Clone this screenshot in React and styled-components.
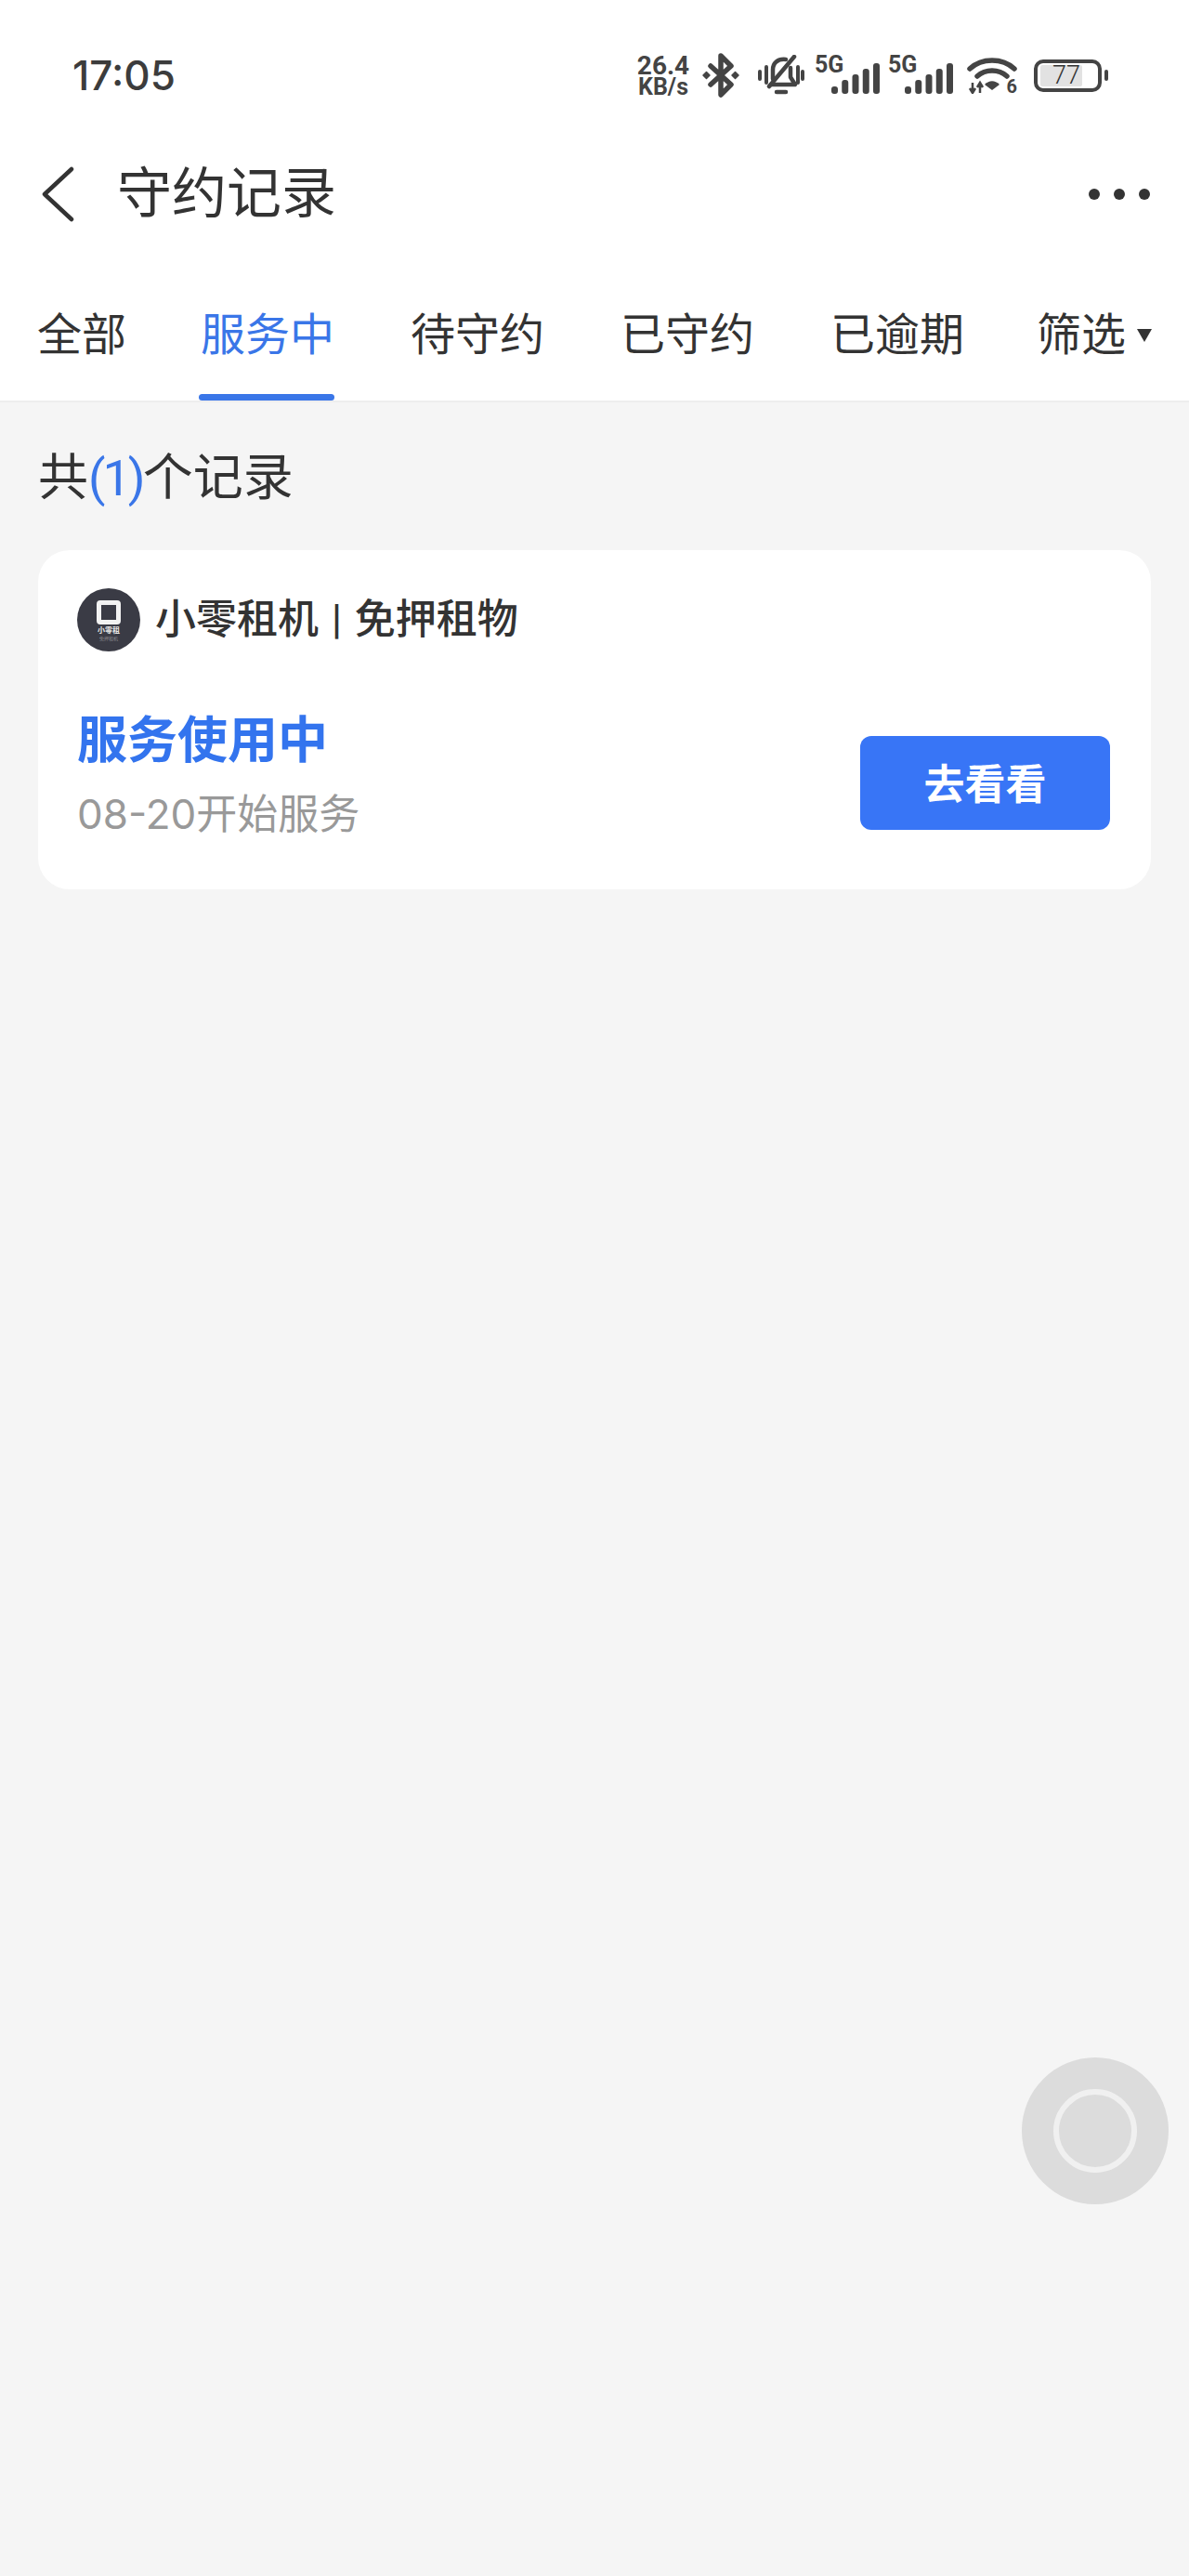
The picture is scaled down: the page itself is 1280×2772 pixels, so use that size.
import styled, { createGlobalStyle } from 'styled-components';

const GlobalStyle = createGlobalStyle`
  html, body {
    margin: 0;
    padding: 0;
    background: #f5f5f5;
    font-family: Roboto, "Noto Sans CJK SC", sans-serif;
  }
  * { box-sizing: border-box; }
`;

const tabs = ['全部', '服务中', '待守约', '已守约', '已逾期'];
const barHeights = [8, 15, 21, 27, 33];

function SignalBars() {
  return (
    <svg width="52" height="33" viewBox="0 0 52 33" fill="#444">
      {barHeights.map((h, i) => (
        <rect key={i} x={i * 11.25} y={33 - h} width="7" height={h} rx="3" />
      ))}
    </svg>
  );
}

function Network() {
  return (
    <NetGroup>
      <NetLabel>5G</NetLabel>
      <SignalBars />
    </NetGroup>
  );
}

function Logo() {
  return (
    <LogoCircle>
      <LogoMark />
      <LogoName>小零租</LogoName>
      <LogoSub>免押租机</LogoSub>
    </LogoCircle>
  );
}

export default function App() {
  return (
    <Page>
      <GlobalStyle />
      <Header>
        <StatusBar>
          <Time>17:05</Time>
          <StatusIcons>
            <Speed>
              <SpeedValue>26.4</SpeedValue>
              <SpeedUnit>KB/s</SpeedUnit>
            </Speed>
            <IconSlot $left={13}>
              <svg width="44" height="48" viewBox="0 0 44 48" fill="none" stroke="#444" strokeWidth="5.500" strokeLinejoin="round" strokeLinecap="round">
                <path d="M10 14 L32 34 L21 45 V3 L32 14 L10 34" />
                <path d="M2 24 L5.500 20.500 L9 24 L5.500 27.500 Z M33 24 L36.500 20.500 L40 24 L36.500 27.500 Z" fill="#444" strokeWidth="1.500" />
              </svg>
            </IconSlot>
            <IconSlot $left={17}>
              <svg width="50" height="44" viewBox="0 0 50 44" fill="none" stroke="#444" strokeWidth="4.500" strokeLinecap="round" strokeLinejoin="round">
                <path d="M16 26 V16 C16 9 21 4 30 5" />
                <path d="M35 14 V24 L40 32 H14" />
                <path d="M39 2 L12 34" />
                <path d="M20 40 H30" />
                <path d="M2 18 V26 M9 13 V30 M43 13 V30 M48 18 V26" strokeWidth="4" />
              </svg>
            </IconSlot>
            <IconSlot $left={11}><Network /></IconSlot>
            <IconSlot $left={9}><Network /></IconSlot>
            <IconSlot $left={15}>
              <WifiBox>
                <svg width="54" height="40" viewBox="0 0 54 40" fill="none" stroke="#444" strokeWidth="5.500" strokeLinecap="round">
                  <path d="M3 13 C16 1 38 1 51 13" />
                  <path d="M11 21 C20 13 34 13 43 21" />
                  <path d="M27 36 L19 30 C24 25 30 25 35 30 Z" fill="#444" stroke="none" />
                  <path d="M6 28 V39 M3 34 L6 39 L9 34 M14 39 V28 M11 33 L14 28 L17 33" strokeWidth="2.500" strokeLinecap="butt" />
                </svg>
                <WifiBadge>6</WifiBadge>
              </WifiBox>
            </IconSlot>
            <IconSlot $left={18}>
              <Battery>
                <BatteryFill />
                <BatteryText>77</BatteryText>
              </Battery>
            </IconSlot>
            <BatteryNub />
          </StatusIcons>
        </StatusBar>
        <NavBar>
          <svg width="36" height="60" viewBox="0 0 36 60" fill="none" stroke="#333" strokeWidth="4.500" strokeLinecap="round" strokeLinejoin="round">
            <path d="M33 3 L4 30 L33 57" />
          </svg>
          <Title>守约记录</Title>
          <MoreDots>
            <Dot />
            <Dot />
            <Dot />
          </MoreDots>
        </NavBar>
        <TabRow>
          {tabs.map((t, i) => (
            <Tab key={t} $active={i === 1}>{t}</Tab>
          ))}
          <FilterTab>
            筛选
            <FilterArrow />
          </FilterTab>
        </TabRow>
      </Header>
      <Content>
        <CountLine>共<CountNum>(1)</CountNum>个记录</CountLine>
        <Card>
          <CardHead>
            <Logo />
            <ShopName>小零租机 | 免押租物</ShopName>
          </CardHead>
          <CardBody>
            <div>
              <StateText>服务使用中</StateText>
              <SubText><SubDate>08-20</SubDate>开始服务</SubText>
            </div>
            <GoButton>去看看</GoButton>
          </CardBody>
        </Card>
      </Content>
      <FloatBall>
        <FloatRing />
      </FloatBall>
    </Page>
  );
}

const Page = styled.div`
  position: relative;
  width: 1280px;
  height: 2772px;
  overflow: hidden;
  background: #f5f5f5;
  color: #333;
`;

const Header = styled.div`
  background: #fff;
  border-bottom: 2px solid #eeeeee;
`;

const StatusBar = styled.div`
  height: 162px;
  padding: 0 87px 0 78px;
  display: flex;
  align-items: center;
  justify-content: space-between;
`;

const Time = styled.div`
  font-family: Inter, Roboto, sans-serif;
  font-size: 44px;
  font-weight: 500;
  color: #3c3c3c;
  line-height: 50px;
`;

const StatusIcons = styled.div`
  display: flex;
  align-items: center;
`;

const Speed = styled.div`
  display: flex;
  flex-direction: column;
  align-items: center;
  width: 56px;
  color: #444;
  font-weight: 700;
`;

const SpeedValue = styled.span`
  font-size: 28px;
  line-height: 24px;
`;

const SpeedUnit = styled.span`
  font-size: 25px;
  line-height: 21px;
`;

const IconSlot = styled.div`
  display: flex;
  margin-left: ${(p) => p.$left}px;
`;

const NetGroup = styled.div`
  position: relative;
  width: 70px;
  height: 40px;
  display: flex;
  align-items: flex-end;
  justify-content: flex-end;
`;

const NetLabel = styled.span`
  position: absolute;
  left: 0;
  top: -3px;
  font-size: 25px;
  font-weight: 700;
  line-height: 24px;
  color: #444;
`;

const WifiBox = styled.div`
  position: relative;
  width: 54px;
  height: 40px;
`;

const WifiBadge = styled.span`
  position: absolute;
  right: 0;
  bottom: -2px;
  font-size: 20px;
  font-weight: 700;
  line-height: 20px;
  color: #444;
`;

const Battery = styled.div`
  position: relative;
  width: 73px;
  height: 35px;
  border: 4px solid #444;
  border-radius: 10px;
  padding: 2px 3px;
`;

const BatteryFill = styled.div`
  width: 45px;
  height: 100%;
  background: #e2e2e2;
  border-radius: 2px;
`;

const BatteryText = styled.span`
  position: absolute;
  left: 16px;
  top: 0;
  font-size: 27px;
  font-weight: 300;
  line-height: 27px;
  color: #333;
`;

const BatteryNub = styled.div`
  width: 4px;
  height: 12px;
  margin-left: 3px;
  background: #444;
  border-radius: 2px;
`;

const NavBar = styled.div`
  height: 90px;
  padding: 4px 42px 0 44px;
  display: flex;
  align-items: center;
`;

const Title = styled.div`
  margin-left: 46px;
  font-size: 59px;
  line-height: 80px;
  color: #333;
`;

const MoreDots = styled.div`
  margin-left: auto;
  display: flex;
  gap: 15px;
`;

const Dot = styled.span`
  width: 12px;
  height: 12px;
  border-radius: 50%;
  background: #333;
`;

const TabRow = styled.div`
  height: 179px;
  padding: 73px 0 0 40px;
  display: flex;
  gap: 82px;
`;

const Tab = styled.div`
  position: relative;
  height: 106px;
  font-size: 48px;
  line-height: 72px;
  color: ${(p) => (p.$active ? '#3a76e8' : '#333')};
  &:first-child {
    margin-right: -2px;
  }
  &::after {
    content: '';
    display: ${(p) => (p.$active ? 'block' : 'none')};
    position: absolute;
    left: -2px;
    right: 0;
    bottom: 0;
    height: 7px;
    border-radius: 4px;
    background: #3a76e8;
  }
`;

const FilterTab = styled(Tab)`
  display: flex;
  margin-left: -4px;
`;

const FilterArrow = styled.span`
  margin: 29px 0 0 12px;
  width: 0;
  height: 0;
  border-left: 8px solid transparent;
  border-right: 8px solid transparent;
  border-top: 14px solid #333;
`;

const Content = styled.div`
  padding: 46px 41px 0;
`;

const CountLine = styled.div`
  font-size: 54px;
  line-height: 72px;
  color: #333;
`;

const CountNum = styled.span`
  color: #3a76e8;
  letter-spacing: -3px;
`;

const Card = styled.div`
  margin-top: 41px;
  height: 365px;
  background: #fff;
  border-radius: 34px;
  padding: 41px 44px 0 42px;
`;

const CardHead = styled.div`
  display: flex;
  align-items: center;
  gap: 16px;
`;

const LogoCircle = styled.div`
  width: 68px;
  height: 68px;
  border-radius: 50%;
  background: #3a3b45;
  display: flex;
  flex-direction: column;
  align-items: center;
  padding-top: 13px;
`;

const LogoMark = styled.div`
  width: 26px;
  height: 26px;
  border: 5px solid #f2f2f2;
  border-radius: 4px;
`;

const LogoName = styled.div`
  margin-top: 2px;
  font-size: 8px;
  line-height: 10px;
  font-weight: 700;
  color: #e8e8e8;
`;

const LogoSub = styled.div`
  font-size: 5px;
  line-height: 7px;
  color: #8a8a90;
`;

const ShopName = styled.div`
  font-size: 44px;
  line-height: 68px;
  font-weight: 500;
  word-spacing: 3px;
  color: #333;
`;

const CardBody = styled.div`
  margin-top: 59px;
  display: flex;
  justify-content: space-between;
  align-items: flex-start;
`;

const StateText = styled.div`
  padding-top: 3px;
  font-size: 54px;
  line-height: 70px;
  font-weight: 700;
  color: #3374ee;
`;

const SubText = styled.div`
  margin-top: 13px;
  font-size: 44px;
  line-height: 60px;
  color: #999;
`;

const SubDate = styled.span`
  font-family: Inter, Roboto, sans-serif;
`;

const GoButton = styled.div`
  margin-top: 32px;
  width: 269px;
  height: 101px;
  padding-bottom: 4px;
  border-radius: 12px;
  background: #3875f6;
  color: #fff;
  font-size: 44px;
  font-weight: 700;
  display: flex;
  align-items: center;
  justify-content: center;
`;

const FloatBall = styled.div`
  position: absolute;
  left: 1100px;
  top: 2214px;
  width: 158px;
  height: 158px;
  border-radius: 50%;
  background: #dcdcdc;
  display: flex;
  align-items: center;
  justify-content: center;
`;

const FloatRing = styled.div`
  width: 90px;
  height: 90px;
  border-radius: 50%;
  border: 6px solid #f0f0f0;
`;
